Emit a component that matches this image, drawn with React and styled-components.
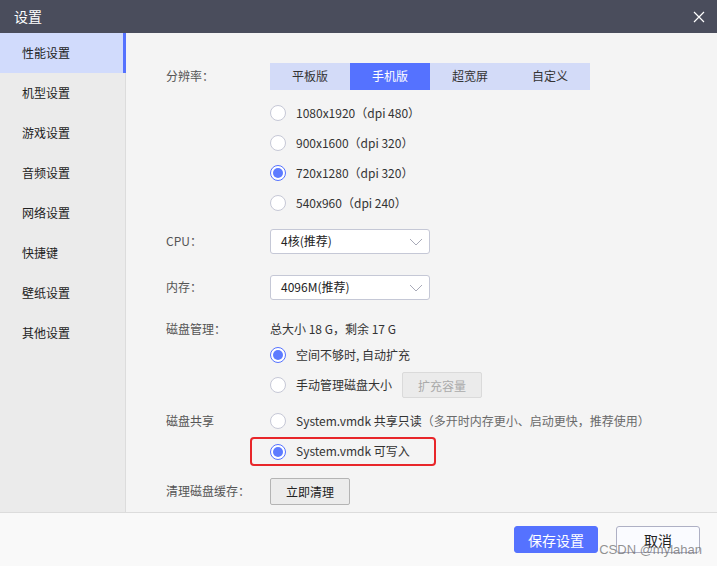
import React, { useState } from 'react';
import styled, { createGlobalStyle } from 'styled-components';

const GlobalStyle = createGlobalStyle`
  html, body {
    margin: 0;
    padding: 0;
    background: #f4f4f4;
  }
  * {
    box-sizing: border-box;
  }
`;

const Window = styled.div`
  position: relative;
  width: 717px;
  height: 566px;
  display: flex;
  flex-direction: column;
  font-family: "Noto Sans CJK SC", "Noto Sans", "Liberation Sans", sans-serif;
  font-size: 12px;
  line-height: 1.2;
  color: #333;
  background: #f4f4f4;
  overflow: hidden;
`;

const TitleBar = styled.div`
  height: 33px;
  flex-shrink: 0;
  background: #4a4d5c;
  color: #fff;
  display: flex;
  align-items: center;
  justify-content: space-between;
  padding: 0 10px 0 14px;
  font-size: 14px;
`;

const CloseButton = styled.button`
  width: 16px;
  height: 16px;
  padding: 0;
  border: none;
  background: transparent;
  display: flex;
  align-items: center;
  justify-content: center;
  cursor: pointer;
`;

const Body = styled.div`
  flex: 1;
  display: flex;
  min-height: 0;
`;

const Sidebar = styled.div`
  width: 126px;
  flex-shrink: 0;
  background: #ebebeb;
  border-right: 1px solid #dcdcdc;
  display: flex;
  flex-direction: column;
`;

const NavItem = styled.div`
  height: 40px;
  display: flex;
  align-items: center;
  padding: 1px 0 0 22px;
  color: #222;
  cursor: pointer;
  background: ${({ active }) => (active ? '#d1dbfc' : 'transparent')};
  border-right: 3px solid ${({ active }) => (active ? '#5572ff' : 'transparent')};
  margin-right: -1px;
`;

const Content = styled.div`
  flex: 1;
  padding: 30px 0 0 40px;
  display: flex;
  flex-direction: column;
`;

const Row = styled.div`
  display: grid;
  grid-template-columns: 104px 1fr;
  margin-top: ${({ top }) => top || 0}px;
`;

const Label = styled.div`
  color: #555;
  height: ${({ h }) => h || 27}px;
  display: flex;
  align-items: center;
`;

const Field = styled.div`
  display: flex;
  flex-direction: column;
`;

const Tabs = styled.div`
  display: flex;
  width: 320px;
  height: 27px;
  background: #d3dbf8;
`;

const Tab = styled.div`
  width: 80px;
  display: flex;
  align-items: center;
  justify-content: center;
  cursor: pointer;
  color: ${({ active }) => (active ? '#fff' : '#333')};
  background: ${({ active }) => (active ? '#5572ff' : 'transparent')};
`;

const RadioList = styled.div`
  display: flex;
  flex-direction: column;
  margin-top: ${({ top }) => top || 0}px;
`;

const RadioRow = styled.label`
  height: 30px;
  display: flex;
  align-items: center;
  gap: 10px;
  cursor: pointer;
  color: #333;
  white-space: nowrap;
`;

const RadioDot = styled.span`
  width: 16px;
  height: 16px;
  border-radius: 50%;
  flex-shrink: 0;
  background: #fff;
  border: 1px solid ${({ checked }) => (checked ? '#5572ff' : '#c6c8d6')};
  display: flex;
  align-items: center;
  justify-content: center;
  &::after {
    content: '';
    width: 10px;
    height: 10px;
    border-radius: 50%;
    background: ${({ checked }) => (checked ? '#5d7bff' : 'transparent')};
  }
`;

const Hint = styled.span`
  color: #6a6a6a;
`;

const Select = styled.div`
  width: 160px;
  height: 25px;
  background: #fff;
  border: 1px solid #c5c8d6;
  border-radius: 3px;
  display: flex;
  align-items: center;
  justify-content: space-between;
  padding: 0 6px 0 10px;
  color: #222;
  cursor: pointer;
`;

const InfoText = styled.div`
  height: 20px;
  display: flex;
  align-items: center;
  color: #333;
`;

const GrayButton = styled.button`
  width: 80px;
  height: ${({ h }) => h || 27}px;
  font-family: inherit;
  font-size: 12px;
  border-radius: 2px;
  border: 1px solid ${({ disabled }) => (disabled ? '#dadada' : '#b4b4b4')};
  background: ${({ disabled }) => (disabled ? '#ebebeb' : '#ececec')};
  color: ${({ disabled }) => (disabled ? '#aaa' : '#222')};
  padding: 0;
  cursor: pointer;
`;

const Highlight = styled.div`
  width: 186px;
  height: 29px;
  margin-left: -20px;
  margin-top: 1px;
  padding-left: 18px;
  border: 2px solid #e8262a;
  border-radius: 4px;
  display: flex;
  align-items: center;
`;

const Footer = styled.div`
  height: 54px;
  flex-shrink: 0;
  background: #f9f9f9;
  border-top: 1px solid #dcdcdc;
  display: flex;
  align-items: center;
  justify-content: flex-end;
  gap: 18px;
  padding: 0 17px 0 0;
`;

const FooterButton = styled.button`
  width: 84px;
  height: 27px;
  font-family: inherit;
  font-size: 14px;
  border-radius: 3px;
  padding: 0;
  cursor: pointer;
  border: 1px solid ${({ primary }) => (primary ? '#5572ff' : '#aeb0c4')};
  background: ${({ primary }) => (primary ? '#5572ff' : '#fafbff')};
  color: ${({ primary }) => (primary ? '#fff' : '#222')};
`;

const Watermark = styled.div`
  position: absolute;
  right: 15px;
  bottom: 8px;
  font-family: "Liberation Sans", "Noto Sans CJK SC", sans-serif;
  font-size: 13px;
  color: rgba(110, 110, 110, 0.75);
  pointer-events: none;
`;

const Chevron = () => (
  <svg width="14" height="8" viewBox="0 0 14 8">
    <path d="M1 1 L7 7 L13 1" fill="none" stroke="#a8aab8" strokeWidth="1" />
  </svg>
);

const Radio = ({ checked, children, onClick }) => (
  <RadioRow onClick={onClick}>
    <RadioDot checked={checked} />
    <span>{children}</span>
  </RadioRow>
);

const navItems = ['性能设置', '机型设置', '游戏设置', '音频设置', '网络设置', '快捷键', '壁纸设置', '其他设置'];
const tabs = ['平板版', '手机版', '超宽屏', '自定义'];
const resolutions = [
  '1080x1920（dpi 480）',
  '900x1600（dpi 320）',
  '720x1280（dpi 320）',
  '540x960（dpi 240）',
];

export default function App() {
  const [nav, setNav] = useState(0);
  const [tab, setTab] = useState(1);
  const [res, setRes] = useState(2);
  const [disk, setDisk] = useState(0);
  const [share, setShare] = useState(1);

  return (
    <>
      <GlobalStyle />
      <Window>
        <TitleBar>
          <span>设置</span>
          <CloseButton>
            <svg width="12" height="12" viewBox="0 0 12 12">
              <path d="M1 1 L11 11 M11 1 L1 11" stroke="#fff" strokeWidth="1.2" />
            </svg>
          </CloseButton>
        </TitleBar>
        <Body>
          <Sidebar>
            {navItems.map((item, i) => (
              <NavItem key={item} active={i === nav} onClick={() => setNav(i)}>
                {item}
              </NavItem>
            ))}
          </Sidebar>
          <Content>
            <Row>
              <Label>分辨率：</Label>
              <Field>
                <Tabs>
                  {tabs.map((t, i) => (
                    <Tab key={t} active={i === tab} onClick={() => setTab(i)}>
                      {t}
                    </Tab>
                  ))}
                </Tabs>
                <RadioList top={8}>
                  {resolutions.map((r, i) => (
                    <Radio key={r} checked={i === res} onClick={() => setRes(i)}>
                      {r}
                    </Radio>
                  ))}
                </RadioList>
              </Field>
            </Row>

            <Row top={11}>
              <Label h={25}>CPU：</Label>
              <Select>
                <span>4核(推荐)</span>
                <Chevron />
              </Select>
            </Row>

            <Row top={21}>
              <Label h={25}>内存：</Label>
              <Select>
                <span>4096M(推荐)</span>
                <Chevron />
              </Select>
            </Row>

            <Row top={19}>
              <Label h={20}>磁盘管理：</Label>
              <Field>
                <InfoText>总大小 18 G，剩余 17 G</InfoText>
                <RadioList top={1}>
                  <Radio checked={disk === 0} onClick={() => setDisk(0)}>
                    空间不够时, 自动扩充
                  </Radio>
                  <RadioRow as="div">
                    <RadioDot checked={disk === 1} onClick={() => setDisk(1)} />
                    <span>手动管理磁盘大小</span>
                    <GrayButton disabled h={26}>扩充容量</GrayButton>
                  </RadioRow>
                </RadioList>
              </Field>
            </Row>

            <Row top={6}>
              <Label h={30}>磁盘共享</Label>
              <Field>
                <Radio checked={share === 0} onClick={() => setShare(0)}>
                  System.vmdk 共享只读<Hint>（多开时内存更小、启动更快，推荐使用）</Hint>
                </Radio>
                <Highlight>
                  <Radio checked={share === 1} onClick={() => setShare(1)}>
                    System.vmdk 可写入
                  </Radio>
                </Highlight>
              </Field>
            </Row>

            <Row top={12}>
              <Label>清理磁盘缓存：</Label>
              <GrayButton>立即清理</GrayButton>
            </Row>
          </Content>
        </Body>
        <Footer>
          <FooterButton primary>保存设置</FooterButton>
          <FooterButton>取消</FooterButton>
        </Footer>
        <Watermark>CSDN @mylahan</Watermark>
      </Window>
    </>
  );
}
